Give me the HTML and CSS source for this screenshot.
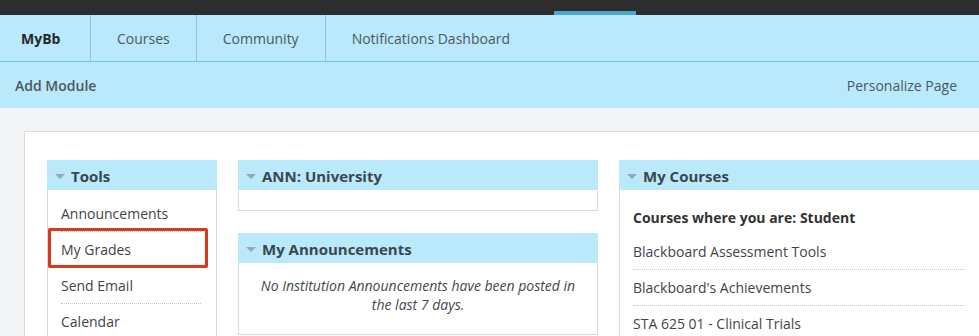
FILE: index.html
```html
<!DOCTYPE html>
<html>
<head>
  <title>My Blackboard</title>
  <link rel="stylesheet" href="styles.css">
</head>
<body>
  <div id="topbar">
    <div class="active-marker"></div>
  </div>

  <div id="tabs">
    <a class="tab tab-first current">MyBb</a>
    <a class="tab">Courses</a>
    <a class="tab">Community</a>
    <a class="tab tab-last">Notifications Dashboard</a>
  </div>

  <div id="actionbar">
    <span class="add-module">Add Module</span>
    <span class="personalize">Personalize Page</span>
  </div>

  <div id="content">
    <div id="panel">
      <div class="column col-tools">
        <div class="module">
          <div class="module-head"><span class="caret"></span>Tools</div>
          <ul class="link-list tools-list">
            <li>Announcements</li>
            <li class="marked">My Grades<span class="highlight"></span></li>
            <li>Send Email</li>
            <li>Calendar</li>
          </ul>
        </div>
      </div>

      <div class="column col-mid">
        <div class="module">
          <div class="module-head"><span class="caret"></span>ANN: University</div>
          <div class="module-empty"></div>
        </div>
        <div class="module">
          <div class="module-head"><span class="caret"></span>My Announcements</div>
          <p class="empty-note">No Institution Announcements have been posted in the last 7 days.</p>
        </div>
      </div>

      <div class="column col-courses">
        <div class="module">
          <div class="module-head"><span class="caret"></span>My Courses</div>
          <div class="courses-body">
            <h4 class="role-title">Courses where you are: Student</h4>
            <ul class="link-list course-list">
              <li>Blackboard Assessment Tools</li>
              <li>Blackboard's Achievements</li>
              <li>STA 625 01 - Clinical Trials</li>
            </ul>
          </div>
        </div>
      </div>
    </div>
  </div>
</body>
</html>
```

FILE: styles.css
```css
html, body {
  margin: 0;
  padding: 0;
  height: 100%;
  overflow: hidden;
}

body {
  font-family: "Open Sans", "Noto Sans", Arial, sans-serif;
  font-size: 14px;
  color: #3f4448;
  background-color: #f3f4f5;
}

#topbar {
  height: 15px;
  background-color: #2d2d2d;
  display: flex;
  align-items: flex-end;
}

#topbar .active-marker {
  margin-left: 554px;
  width: 82px;
  height: 4px;
  background-color: #48a9d4;
}

#tabs {
  display: flex;
  height: 46px;
  background-color: #bae9fb;
  border-bottom: 1px solid #72c2e2;
}

.tab {
  display: flex;
  align-items: center;
  padding: 0 26px;
  color: #4b5860;
  border-right: 1px solid #7cc8e6;
}

.tab-first {
  width: 91px;
  box-sizing: border-box;
  padding-left: 21px;
  padding-right: 0;
}

.tab.current {
  font-weight: 700;
  color: #24282b;
}

.tab-last {
  border-right: none;
}

#actionbar {
  height: 46px;
  background-color: #bae9fb;
  display: flex;
  align-items: center;
  justify-content: space-between;
  padding: 0 22px 0 15px;
}

.add-module {
  font-weight: 600;
  color: #4b5860;
}

.personalize {
  color: #4b5860;
}

#content {
  padding: 23px 0 0 24px;
}

#panel {
  background-color: #fff;
  border: 1px solid #dcdcdc;
  border-right: none;
  padding: 28px 0 0 22px;
  display: flex;
  gap: 21px;
  height: 400px;
}

.column {
  display: flex;
  flex-direction: column;
  gap: 22px;
  flex-shrink: 0;
}

.col-tools {
  width: 170px;
}

.col-mid {
  width: 360px;
}

.col-courses {
  width: 380px;
}

.module {
  background-color: #fff;
  border: 1px solid #d6dbde;
  border-top: none;
}

.module-head {
  height: 30px;
  background-color: #bae9fb;
  display: flex;
  align-items: center;
  padding: 1px 0 0 7px;
  box-sizing: border-box;
  margin: 0 -1px;
  font-size: 15px;
  font-weight: 700;
  color: #3b464d;
}

.caret {
  width: 0;
  height: 0;
  border-left: 5px solid transparent;
  border-right: 5px solid transparent;
  border-top: 5px solid #93a9b3;
  margin: 2px 6px 0 1px;
}

.module-empty {
  height: 20px;
}

.link-list {
  list-style: none;
  margin: 0;
  padding: 0;
}

.link-list li {
  padding: 8px 0;
  line-height: 19px;
  border-bottom: 1px dotted #c4c4c4;
  color: #3f4448;
}

.link-list li:last-child {
  border-bottom: none;
}

.tools-list {
  padding: 6px 15px 0 13px;
}

.marked {
  position: relative;
}

.highlight {
  position: absolute;
  top: -4px;
  left: -13px;
  right: -7px;
  bottom: -1px;
  border: 3px solid #d7391f;
  border-radius: 2px;
}

.empty-note {
  margin: 0;
  padding: 13px 20px 20px;
  text-align: center;
  font-style: italic;
  line-height: 19px;
  color: #44494d;
}

.courses-body {
  padding: 18px 14px 0 13px;
}

.role-title {
  margin: 0 0 7px;
  font-size: 14px;
  font-weight: 700;
  line-height: 19px;
  color: #333;
}

.course-list {
  width: 332px;
}
```
